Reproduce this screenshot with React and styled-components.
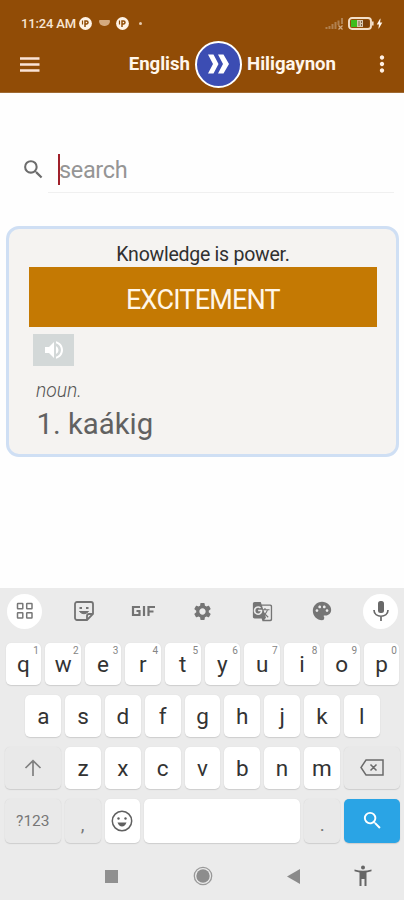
import React, { useState } from "react";
import styled, { createGlobalStyle } from "styled-components";
import { MdSearch, MdVolumeUp, MdSettings, MdGTranslate, MdPalette, MdMoreVert, MdBolt } from "react-icons/md";

const topRow = ["q", "w", "e", "r", "t", "y", "u", "i", "o", "p"];
const homeRow = ["a", "s", "d", "f", "g", "h", "j", "k", "l"];
const bottomRow = ["z", "x", "c", "v", "b", "n", "m"];

function NotifyIcon() {
  return (
    <svg width="13" height="13" viewBox="0 0 13 13">
      <circle cx="6.5" cy="6.5" r="6.4" fill="#fff3e6" />
      <path d="M6 10V4h1.500a1.500 1.500 0 0 1 0 3H6" fill="none" stroke="#914c06" strokeWidth="1.500" />
      <path d="M3.500 3.500v4" stroke="#914c06" strokeWidth="1.200" />
    </svg>
  );
}

function SignalIcon() {
  return (
    <svg width="19" height="13" viewBox="0 0 19 13">
      <path d="M1.5 10v2M4.5 9v3M7.5 7v5M10.5 5v7M13.5 3.5V8M17 1v6" stroke="#b0804f" strokeWidth="2" />
      <path d="m13.5 8.500 4 4m0-4-4 4" stroke="#d0aa83" strokeWidth="1.2" />
    </svg>
  );
}

function BatteryIcon() {
  return (
    <svg width="26" height="13" viewBox="0 0 26 13">
      <rect x="1" y="1" width="22" height="11" rx="3" fill="#914c06" stroke="#f3dfc9" strokeWidth="1.9" />
      <rect x="3" y="3" width="6" height="7" fill="#3ebd1c" />
      <rect x="9" y="3" width="6" height="7" fill="#d8c8b0" />
      <path d="M11 4v5M13.500 4v2M13.500 7v2" stroke="#806247" strokeWidth="1" />
      <rect x="15" y="3" width="6" height="7" fill="#7d4109" />
      <path d="M24.800 4.500v4" stroke="#f3dfc9" strokeWidth="1.600" />
    </svg>
  );
}

function MenuIcon() {
  return (
    <svg width="20" height="15" viewBox="0 0 20 15">
      <path d="M0 1.500h19.500M0 7.500h19.500M0 13.500h19.500" stroke="#fbe3d6" strokeWidth="2.500" />
    </svg>
  );
}

function SwapIcon() {
  return (
    <svg width="23" height="20" viewBox="0 0 23 20">
      <path d="M1 .5h5.500l5 9.500-5 9.500H1L6 10zM11 .5h5.500l5.500 9.500-5.500 9.500H11l5-9.500z" fill="#fff" />
    </svg>
  );
}

function GridIcon() {
  return (
    <svg width="18" height="18" viewBox="0 0 18 18" fill="none" stroke="#777" strokeWidth="1.500">
      <rect x="1.500" y="1.500" width="5.300" height="5.300" rx=".5" />
      <rect x="10.700" y="1.500" width="5.300" height="5.300" rx=".5" />
      <rect x="1.500" y="10.700" width="5.300" height="5.300" rx=".5" />
      <rect x="10.700" y="10.700" width="5.300" height="5.300" rx=".5" />
    </svg>
  );
}

function StickerIcon() {
  return (
    <svg width="20" height="20" viewBox="0 0 20 20" fill="none" stroke="#737373" strokeWidth="1.800">
      <path d="M3 1h14a2 2 0 0 1 2 2v10l-6 6H3a2 2 0 0 1-2-2V3a2 2 0 0 1 2-2z" />
      <path d="M13 18.500V15a2 2 0 0 1 2-2h3.500" />
      <path d="M5.500 10.500q4.500 4.500 9 0z" fill="#737373" strokeWidth="1" />
      <path d="M5.500 7h2.500M12 7h2.500" strokeWidth="1.900" />
    </svg>
  );
}

function GifIcon() {
  return (
    <svg width="24" height="12" viewBox="0 0 24 12" fill="none" stroke="#737373" strokeWidth="2.200">
      <path d="M9 2H2v8h6.500V6H5.500M13 1v10M17.500 11V2H24M17.500 6.500h5" />
    </svg>
  );
}

function MicIcon() {
  return (
    <svg width="18" height="22" viewBox="0 0 18 22" fill="none" stroke="#696969" strokeWidth="1.700">
      <rect x="6" y="1" width="6" height="12" rx="2.500" fill="#696969" stroke="none" />
      <path d="M2 10c0 8.300 14 8.300 14 0M9 16v5" />
    </svg>
  );
}

function ShiftIcon() {
  return (
    <svg width="18" height="18" viewBox="0 0 18 18" fill="none" stroke="#808080" strokeWidth="1.700">
      <path d="M9 17V2M1.500 9 9 1.700 16.500 9" />
    </svg>
  );
}

function DeleteIcon() {
  return (
    <svg width="24" height="17" viewBox="0 0 24 17" fill="none" stroke="#6b6b6b" strokeWidth="1.500">
      <path d="M6 1h17v15H6L1 8.500zM10.500 5.500l6 6m0-6-6 6" />
    </svg>
  );
}

function SmileIcon() {
  return (
    <svg width="22" height="22" viewBox="0 0 22 22">
      <circle cx="11" cy="11" r="9.700" fill="none" stroke="#606060" strokeWidth="1.500" />
      <circle cx="7.500" cy="8.500" r="1.200" fill="#606060" />
      <circle cx="14.500" cy="8.500" r="1.200" fill="#606060" />
      <path d="M6.500 12.500h9q-1.500 4-4.500 4t-4.500-4z" fill="#606060" />
    </svg>
  );
}

function PersonIcon() {
  return (
    <svg width="18" height="22" viewBox="0 0 18 22" fill="#666">
      <circle cx="9" cy="2.500" r="2" />
      <path d="M.5 4.500Q9 7 17.500 4.500v1.800l-5 1.200V21h-2v-7h-3v7h-2V7.500l-5-1.200z" />
    </svg>
  );
}

export default function App() {
  const [word, setWord] = useState("");

  return (
    <Screen>
      <GlobalStyle />
      <Header>
        <StatusBar>
          <Clock>11:24 AM</Clock>
          <NotifyIcon />
          <Pill />
          <NotifyIcon />
          <Dot />
          <StatusRight>
            <SignalIcon />
            <BatteryIcon />
            <MdBolt size={13} />
          </StatusRight>
        </StatusBar>
        <AppBar>
          <IconButton type="button" aria-label="Menu">
            <MenuIcon />
          </IconButton>
          <Languages>
            <Language $align="right">English</Language>
            <SwapButton type="button" aria-label="Swap">
              <SwapIcon />
            </SwapButton>
            <Language>Hiligaynon</Language>
          </Languages>
          <IconButton type="button" aria-label="More">
            <MdMoreVert size={26} />
          </IconButton>
        </AppBar>
      </Header>

      <Main>
        <SearchRow>
          <MdSearch size={25} />
          <SearchField>
            <Caret />
            <SearchInput value={word} onChange={(e) => setWord(e.target.value)} placeholder="search" />
          </SearchField>
        </SearchRow>
        <Card>
          <Quote>Knowledge is power.</Quote>
          <Banner>EXCITEMENT</Banner>
          <SpeakButton type="button" aria-label="Speak">
            <MdVolumeUp size={24} />
          </SpeakButton>
          <PartOfSpeech>noun.</PartOfSpeech>
          <Meaning>1. kaákig</Meaning>
        </Card>
      </Main>

      <Keyboard>
        <Toolbar>
          <Tool $round>
            <GridIcon />
          </Tool>
          <Tool>
            <StickerIcon />
          </Tool>
          <Tool>
            <GifIcon />
          </Tool>
          <Tool>
            <MdSettings size={21} />
          </Tool>
          <Tool>
            <MdGTranslate size={21} />
          </Tool>
          <Tool>
            <MdPalette size={22} />
          </Tool>
          <Tool $round>
            <MicIcon />
          </Tool>
        </Toolbar>
        <KeyRow>
          {topRow.map((letter, i) => (
            <Key key={letter}>
              {letter}
              <Hint>{(i + 1) % 10}</Hint>
            </Key>
          ))}
        </KeyRow>
        <KeyRow>
          {homeRow.map((letter) => (
            <Key key={letter}>{letter}</Key>
          ))}
        </KeyRow>
        <KeyRow>
          <Key $wide $muted>
            <ShiftIcon />
          </Key>
          {bottomRow.map((letter) => (
            <Key key={letter}>{letter}</Key>
          ))}
          <Key $wide $muted>
            <DeleteIcon />
          </Key>
        </KeyRow>
        <KeyRow $tall>
          <ModeKey $wide $muted>
            ?123
          </ModeKey>
          <PunctuationKey $muted>,</PunctuationKey>
          <Key>
            <SmileIcon />
          </Key>
          <SpaceKey />
          <PunctuationKey $muted>.</PunctuationKey>
          <SearchKey $wide>
            <MdSearch size={23} />
          </SearchKey>
        </KeyRow>
        <NavBar>
          <NavItem>
            <svg width="13" height="13">
              <rect width="13" height="13" fill="#909090" />
            </svg>
          </NavItem>
          <NavItem>
            <svg width="20" height="20" viewBox="0 0 20 20">
              <circle cx="10" cy="10" r="8.700" fill="none" stroke="#999" strokeWidth="1.300" />
              <circle cx="10" cy="10" r="6.700" fill="#8d8d8d" />
            </svg>
          </NavItem>
          <NavItem>
            <svg width="13" height="15">
              <path d="M13 0v15L0 7.500z" fill="#8b8b8b" />
            </svg>
          </NavItem>
          <AccessItem>
            <PersonIcon />
          </AccessItem>
        </NavBar>
      </Keyboard>
    </Screen>
  );
}

const GlobalStyle = createGlobalStyle`
  * {
    box-sizing: border-box;
  }
  body {
    margin: 0;
    font-family: Roboto, "Liberation Sans", sans-serif;
  }
  button {
    border: none;
    padding: 0;
    font-family: inherit;
  }
  p {
    margin: 0;
  }
  svg {
    flex-shrink: 0;
  }
`;

const Screen = styled.div`
  display: flex;
  flex-direction: column;
  width: 404px;
  height: 900px;
  overflow: hidden;
  background: #fefefe;
`;

const Header = styled.header`
  height: 93px;
  background: #914c06;
  color: #fff6ec;
  border-bottom: 1px solid #9f6a33;
`;

const StatusBar = styled.div`
  display: flex;
  align-items: center;
  height: 36px;
  padding: 10px 18px 0 21px;
`;

const Clock = styled.span`
  width: 58px;
  font-size: 13px;
  font-weight: 500;
  letter-spacing: -0.15px;
  white-space: nowrap;
  color: #f8e5d2;
`;

const Pill = styled.span`
  width: 11px;
  height: 6px;
  margin: 0 6px 0 7px;
  border-radius: 1px 1px 5px 5px;
  background: #d4aa7f;
`;

const Dot = styled.span`
  width: 3px;
  height: 3px;
  margin-left: 10px;
  border-radius: 50%;
  background: #e5c9ac;
`;

const StatusRight = styled.div`
  display: flex;
  align-items: center;
  gap: 4px;
  margin-left: auto;

  svg:last-child {
    margin: 0 0 0 -5px;
  }
`;

const AppBar = styled.div`
  display: flex;
  align-items: center;
  height: 56px;
  padding: 0 9px 0 19.5px;
`;

const IconButton = styled.button`
  display: flex;
  background: none;
  color: #fff0e3;
`;

const Languages = styled.div`
  display: flex;
  flex: 1;
  align-items: center;
  justify-content: flex-end;
  gap: 5px;
  padding-right: 32px;
`;

const Language = styled.span`
  font-size: 18.6px;
  font-weight: 700;
  width: ${({ $align }) => ($align ? "auto" : "90px")};
  text-align: ${({ $align }) => $align || "left"};
  white-space: nowrap;
`;

const SwapButton = styled.button`
  display: flex;
  align-items: center;
  justify-content: center;
  width: 47px;
  height: 47px;
  border: 2px solid #fff;
  border-radius: 50%;
  background: #3c4db3;
`;

const Main = styled.main`
  flex: 1;
  padding: 53px 5px 0 6px;
`;

const SearchRow = styled.div`
  display: flex;
  align-items: center;
  height: 47px;
  padding-left: 14.5px;
  color: #6c6c6c;
`;

const SearchField = styled.label`
  display: flex;
  align-items: center;
  width: 346px;
  height: 47px;
  margin-left: 2.5px;
  padding-left: 10px;
  border-bottom: 1px solid #f0f0f0;
`;

const Caret = styled.span`
  width: 2px;
  height: 31px;
  background: #a0202a;
`;

const SearchInput = styled.input`
  width: 300px;
  margin: 2px 0 0 -1px;
  padding: 0;
  border: none;
  outline: none;
  background: transparent;
  font-family: inherit;
  font-size: 23.5px;
  letter-spacing: -0.35px;
  color: #555;
  &::placeholder {
    color: #959595;
  }
`;

const Card = styled.section`
  height: 231px;
  margin-top: 33px;
  padding: 16px 19px 0 20px;
  border: 3px solid #cfdff4;
  border-radius: 13px;
  background: #f5f3f1;
`;

const Quote = styled.p`
  height: 22px;
  font-size: 19.5px;
  letter-spacing: -0.25px;
  line-height: 20px;
  text-align: center;
  color: #303030;
`;

const Banner = styled.h1`
  height: 60px;
  margin: 0;
  font-size: 27px;
  font-weight: 400;
  letter-spacing: -0.8px;
  line-height: 66px;
  text-align: center;
  background: #c47903;
  color: #fff6e9;
`;

const SpeakButton = styled.button`
  display: flex;
  align-items: center;
  justify-content: center;
  width: 41px;
  height: 32px;
  margin: 7px 0 0 4px;
  background: #d3d8d8;
  color: #fff;
`;

const PartOfSpeech = styled.p`
  margin: 12px 0 0 7px;
  font-size: 19.3px;
  font-style: italic;
  font-weight: 300;
  line-height: 25px;
  color: #555;
`;

const Meaning = styled.p`
  margin: 4px 0 0 7.5px;
  font-size: 29.3px;
  line-height: 34px;
  color: #616161;
`;

const Keyboard = styled.section`
  display: flex;
  flex-direction: column;
  height: 312px;
  background: #ebebeb;
`;

const Toolbar = styled.div`
  display: flex;
  align-items: center;
  justify-content: space-between;
  height: 46px;
  padding: 0 5.5px 0 7px;
  margin-bottom: 9px;
`;

const Tool = styled.div`
  display: flex;
  align-items: center;
  justify-content: center;
  width: 35px;
  height: 35px;
  border-radius: 50%;
  background: ${({ $round }) => ($round ? "#fff" : "transparent")};
  color: #757575;
`;

const KeyRow = styled.div`
  display: flex;
  justify-content: center;
  gap: 4px;
  height: ${({ $tall }) => ($tall ? "44px" : "42px")};
  margin-bottom: 10px;
  padding-left: 1px;
`;

const Key = styled.div`
  position: relative;
  display: flex;
  align-items: center;
  justify-content: center;
  width: ${({ $wide }) => ($wide ? "56px" : "35.8px")};
  border-radius: 5px;
  background: ${({ $muted }) => ($muted ? "#e9e9e9" : "#fff")};
  box-shadow: 0 1px 1px #cecece, 0 0 1px #d5d5d5;
  font-size: 22.5px;
  line-height: 28px;
  padding-bottom: 1px;
  color: #333;
`;

const Hint = styled.span`
  position: absolute;
  top: 2px;
  right: 2.5px;
  font-size: 10px;
  line-height: 11px;
  color: #858585;
`;

const ModeKey = styled(Key)`
  font-size: 15.5px;
  color: #777;
`;

const PunctuationKey = styled(Key)`
  align-items: flex-end;
  padding-bottom: 4px;
  font-size: 19px;
  color: #777;
`;

const SpaceKey = styled(Key)`
  width: 156px;
`;

const SearchKey = styled(Key)`
  background: #2aa4e5;
  color: #fff;
`;

const NavBar = styled.div`
  display: flex;
  align-items: center;
  height: 46px;
  padding-left: 66px;
`;

const NavItem = styled.div`
  display: flex;
  justify-content: center;
  width: 91px;
`;

const AccessItem = styled(NavItem)`
  width: 48px;
`;
